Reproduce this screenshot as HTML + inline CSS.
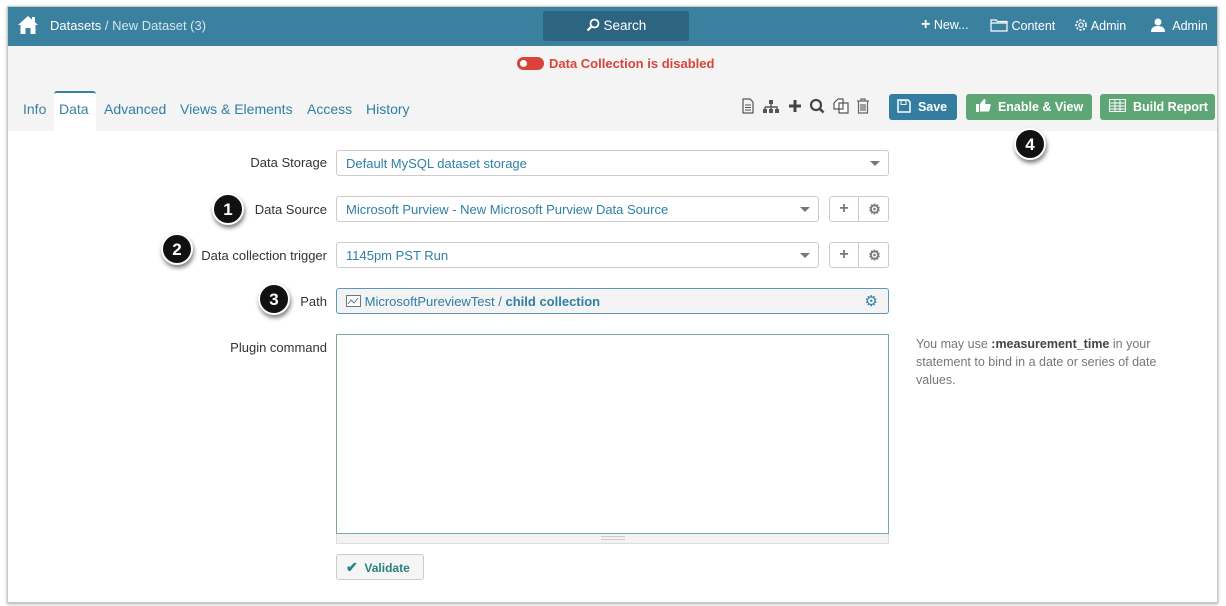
<!DOCTYPE html>
<html><head><meta charset="utf-8"><style>
*{box-sizing:border-box;margin:0;padding:0}
body{width:1226px;height:606px;background:#fff;font-family:"Liberation Sans",Arial,sans-serif;position:relative;overflow:hidden;font-size:13px}
.abs{position:absolute}
#frame{left:7px;top:6px;width:1211px;height:597px;border:1px solid #c8c8c8;box-shadow:0 1px 3px rgba(0,0,0,.35);background:#fff;overflow:hidden}
#hdr{left:0;top:0;width:1211px;height:39px;background:#3a809f;color:#fff}
#gray{left:0;top:39px;width:1211px;height:85px;background:#f4f4f4}
.tab{position:absolute;top:94px;font-size:14px;color:#2f7fa6}
.lbl{position:absolute;font-size:13px;color:#333;text-align:right;right:899px}
.sel{position:absolute;left:336px;height:26px;border:1px solid #ccc;border-radius:3px;background:#fff;color:#2f7fa6;font-size:13px;padding:5px 9px}
.caret{position:absolute;right:8px;top:10px;border-left:5px solid transparent;border-right:5px solid transparent;border-top:5px solid #777}
.btns{position:absolute;left:829px;width:60px;height:26px;border:1px solid #ccc;border-radius:3px;background:#fff}
.btns span{position:absolute;top:0;width:29px;height:24px;text-align:center;line-height:24px;color:#777;font-weight:bold;font-size:16px}
.badge{position:absolute;width:32px;height:32px;border-radius:50%;background:#111;color:#fff;font-size:17px;font-weight:bold;text-align:center;line-height:30px;border:2px solid #fff;box-shadow:1px 3px 4px rgba(0,0,0,.5)}
.btn{position:absolute;top:87px;height:26px;border-radius:3px;color:#fff;font-weight:bold;font-size:12.5px;line-height:26px}
</style></head><body>
<div id="frame" class="abs">
 <div id="hdr" class="abs">
  <svg class="abs" style="left:9px;top:8px" width="22" height="20" viewBox="0 0 22 20"><path d="M11 1 L1 10 L3.5 10 L3.5 19 L8.5 19 L8.5 13 L13.5 13 L13.5 19 L18.5 19 L18.5 10 L21 10 Z" fill="#fff"/><rect x="15" y="2" width="3" height="5" fill="#fff"/></svg>
  <div class="abs" style="left:42px;top:11px;font-size:13px">Datasets <span style="color:#d5e6ee">/ New Dataset (3)</span></div>
  <div class="abs" style="left:535px;top:4px;width:146px;height:30px;background:#2d6480;border-radius:3px;text-align:center;line-height:30px;font-size:13.5px">
   <svg width="14" height="14" viewBox="0 0 14 14" style="vertical-align:-2px"><circle cx="8.5" cy="5.5" r="4" fill="none" stroke="#fff" stroke-width="1.8"/><path d="M5.5 8.5 L1.5 12.5" stroke="#fff" stroke-width="2.2"/></svg> Search</div>
  <div class="abs" style="left:913px;top:11px;font-size:12.5px"><b style="font-size:16px;line-height:12px">+</b> New...</div>
  <div class="abs" style="left:982px;top:11px;font-size:12.5px"><svg width="18" height="14" viewBox="0 0 18 14" style="vertical-align:-2px"><path d="M1 2 H6 L7.5 3.5 H17 V13 H1 Z M1 5 H17" fill="none" stroke="#fff" stroke-width="1.2"/></svg> Content</div>
  <div class="abs" style="left:1066px;top:11px;font-size:12.5px"><svg width="14" height="14" viewBox="0 0 14 14" style="vertical-align:-2px"><circle cx="7" cy="7" r="5" fill="none" stroke="#fff" stroke-width="1.6" stroke-dasharray="2.2 1.4"/><circle cx="7" cy="7" r="2.2" fill="none" stroke="#fff" stroke-width="1.2"/></svg> Admin</div>
  <div class="abs" style="left:1142px;top:11px;font-size:12.5px"><svg width="16" height="14" viewBox="0 0 16 14" style="vertical-align:-2px"><circle cx="8" cy="4" r="3.5" fill="#fff"/><path d="M1 14 Q1 8 8 8 Q15 8 15 14 Z" fill="#fff"/></svg>&nbsp; Admin</div>
 </div>
 <div id="gray" class="abs"></div>
 <div class="abs" style="left:509px;top:50px;width:27px;height:13px;background:#d9443a;border-radius:7px"><div style="position:absolute;left:3px;top:3px;width:7px;height:7px;border-radius:50%;background:#fff"></div></div>
 <div class="abs" style="left:541px;top:49px;color:#d9443a;font-weight:bold;font-size:13px">Data Collection is disabled</div>
 <div class="abs" style="left:46px;top:84px;width:42px;height:40px;background:#fff;border-top:2px solid #3a809f;border-radius:3px 3px 0 0"></div>
 <div class="tab" style="left:15px;color:#3a7fa0">Info</div>
 <div class="tab" style="left:51px;color:#3a809f">Data</div>
 <div class="tab" style="left:96px">Advanced</div>
 <div class="tab" style="left:172px">Views &amp; Elements</div>
 <div class="tab" style="left:299px">Access</div>
 <div class="tab" style="left:358px">History</div>
 <div class="abs" style="left:733px;top:91px;color:#555;font-size:16px;letter-spacing:3px">
  <svg width="14" height="16" viewBox="0 0 14 16"><path d="M2 1 H9 L12 4 V15 H2 Z" fill="none" stroke="#555" stroke-width="1.2"/><path d="M4 7H10M4 9.5H10M4 12H10" stroke="#555"/></svg>
  <svg width="18" height="16" viewBox="0 0 18 16"><rect x="7" y="2" width="4" height="4" fill="#555"/><path d="M9 6V9M3 9H15V11M3 9V11M9 9V11" stroke="#555" stroke-width="1.4" fill="none"/><rect x="1" y="11" width="4" height="4" fill="#555"/><rect x="7" y="11" width="4" height="4" fill="#555"/><rect x="13" y="11" width="4" height="4" fill="#555"/></svg>
  <svg width="14" height="16" viewBox="0 0 14 16"><path d="M7 2V14M1 8H13" stroke="#444" stroke-width="3"/></svg>
  <svg width="16" height="16" viewBox="0 0 16 16"><circle cx="7" cy="7" r="5" fill="none" stroke="#444" stroke-width="2.2"/><path d="M10.5 10.5L14.5 14.5" stroke="#444" stroke-width="2.6"/></svg>
  <svg width="16" height="16" viewBox="0 0 16 16"><path d="M1 5 L5 1 H10 V11 H1 Z M6 5 H15 V15 H6 Z" fill="#fff" stroke="#555" stroke-width="1.2"/></svg>
  <svg width="14" height="16" viewBox="0 0 14 16"><path d="M1 3H13M5 3V1H9V3M2.5 3.5V15H11.5V3.5M5 6V13M7 6V13M9 6V13" fill="none" stroke="#666" stroke-width="1.2"/></svg>
 </div>
 <div class="btn" style="left:881px;width:68px;background:#337ea0;padding-left:8px"><svg width="14" height="14" viewBox="0 0 14 14" style="vertical-align:-2px"><path d="M1 1H11L13 3V13H1Z" fill="none" stroke="#fff" stroke-width="1.5"/><rect x="4" y="1.5" width="5" height="4" fill="none" stroke="#fff"/></svg>&nbsp; Save</div>
 <div class="btn" style="left:958px;width:126px;background:#5ea676;padding-left:10px"><svg width="15" height="13" viewBox="0 0 15 13" style="vertical-align:-1px"><rect x="0" y="5" width="3" height="8" fill="#fff"/><path d="M4 5 L8 0 Q10 0 9.5 3 L9 5 H14 Q15 5.5 14.5 7 L13 12.5 H4 Z" fill="#fff"/></svg>&nbsp; Enable &amp; View</div>
 <div class="btn" style="left:1092px;width:115px;background:#5ea676;padding-left:9px"><svg width="17" height="13" viewBox="0 0 17 13" style="vertical-align:-1px"><rect x="0.5" y="0.5" width="16" height="12" fill="none" stroke="#fff"/><path d="M0.5 4H16.5M0.5 7H16.5M0.5 10H16.5M6 0.5V12.5M11 0.5V12.5" stroke="#fff"/></svg>&nbsp; Build Report</div>
 <div class="badge" style="left:1006px;top:121px">4</div>
</div>

<div class="lbl" style="top:155px">Data Storage</div>
<div class="sel" style="top:150px;width:553px">Default MySQL dataset storage<div class="caret"></div></div>

<div class="badge" style="left:212px;top:193px">1</div>
<div class="lbl" style="top:202px">Data Source</div>
<div class="sel" style="top:196px;width:483px">Microsoft Purview - New Microsoft Purview Data Source<div class="caret"></div></div>
<div class="btns" style="top:196px"><span style="left:0;border-right:1px solid #ccc">+</span><span style="left:30px;font-size:14px">⚙</span></div>

<div class="badge" style="left:161px;top:233px">2</div>
<div class="lbl" style="top:248px">Data collection trigger</div>
<div class="sel" style="top:242px;width:483px">1145pm PST Run<div class="caret"></div></div>
<div class="btns" style="top:242px"><span style="left:0;border-right:1px solid #ccc">+</span><span style="left:30px;font-size:14px">⚙</span></div>

<div class="badge" style="left:258px;top:283px">3</div>
<div class="lbl" style="top:294px">Path</div>
<div class="sel" style="top:288px;width:553px;background:#f3f3f3;border-color:#5c97b7;padding-top:5px;font-size:13px"><svg width="15" height="12" viewBox="0 0 15 12" style="vertical-align:-1px"><rect x=".5" y=".5" width="14" height="11" fill="#fff" stroke="#678"/><path d="M2 9L5 5L8 8L12 3" stroke="#678" fill="none"/></svg> MicrosoftPureviewTest / <b>child collection</b><span style="position:absolute;right:10px;top:3px;color:#2f7fa6;font-size:15px">⚙</span></div>

<div class="lbl" style="top:340px">Plugin command</div>
<div class="abs" style="left:336px;top:334px;width:553px;height:210px;border:1px solid #ddd;background:#f3f3f3"><div style="height:200px;border:1px solid #76b08a;background:#fff;margin:-1px"></div><div style="width:24px;height:4px;border-top:1px solid #ccc;border-bottom:1px solid #ccc;margin:3px auto 0"></div></div>
<div class="abs" style="left:916px;top:335px;width:260px;color:#777;font-size:12.5px;line-height:18px">You may use <b style="color:#444">:measurement_time</b> in your statement to bind in a date or series of date values.</div>

<div class="abs" style="left:336px;top:554px;width:88px;height:26px;border:1px solid #ccc;border-radius:3px;background:#f5f5f5;color:#2a8080;font-weight:bold;font-size:12px;line-height:24px;padding-left:9px"><span style="color:#2a8080;font-size:14px">✔</span>&nbsp; Validate</div>
</body></html>
